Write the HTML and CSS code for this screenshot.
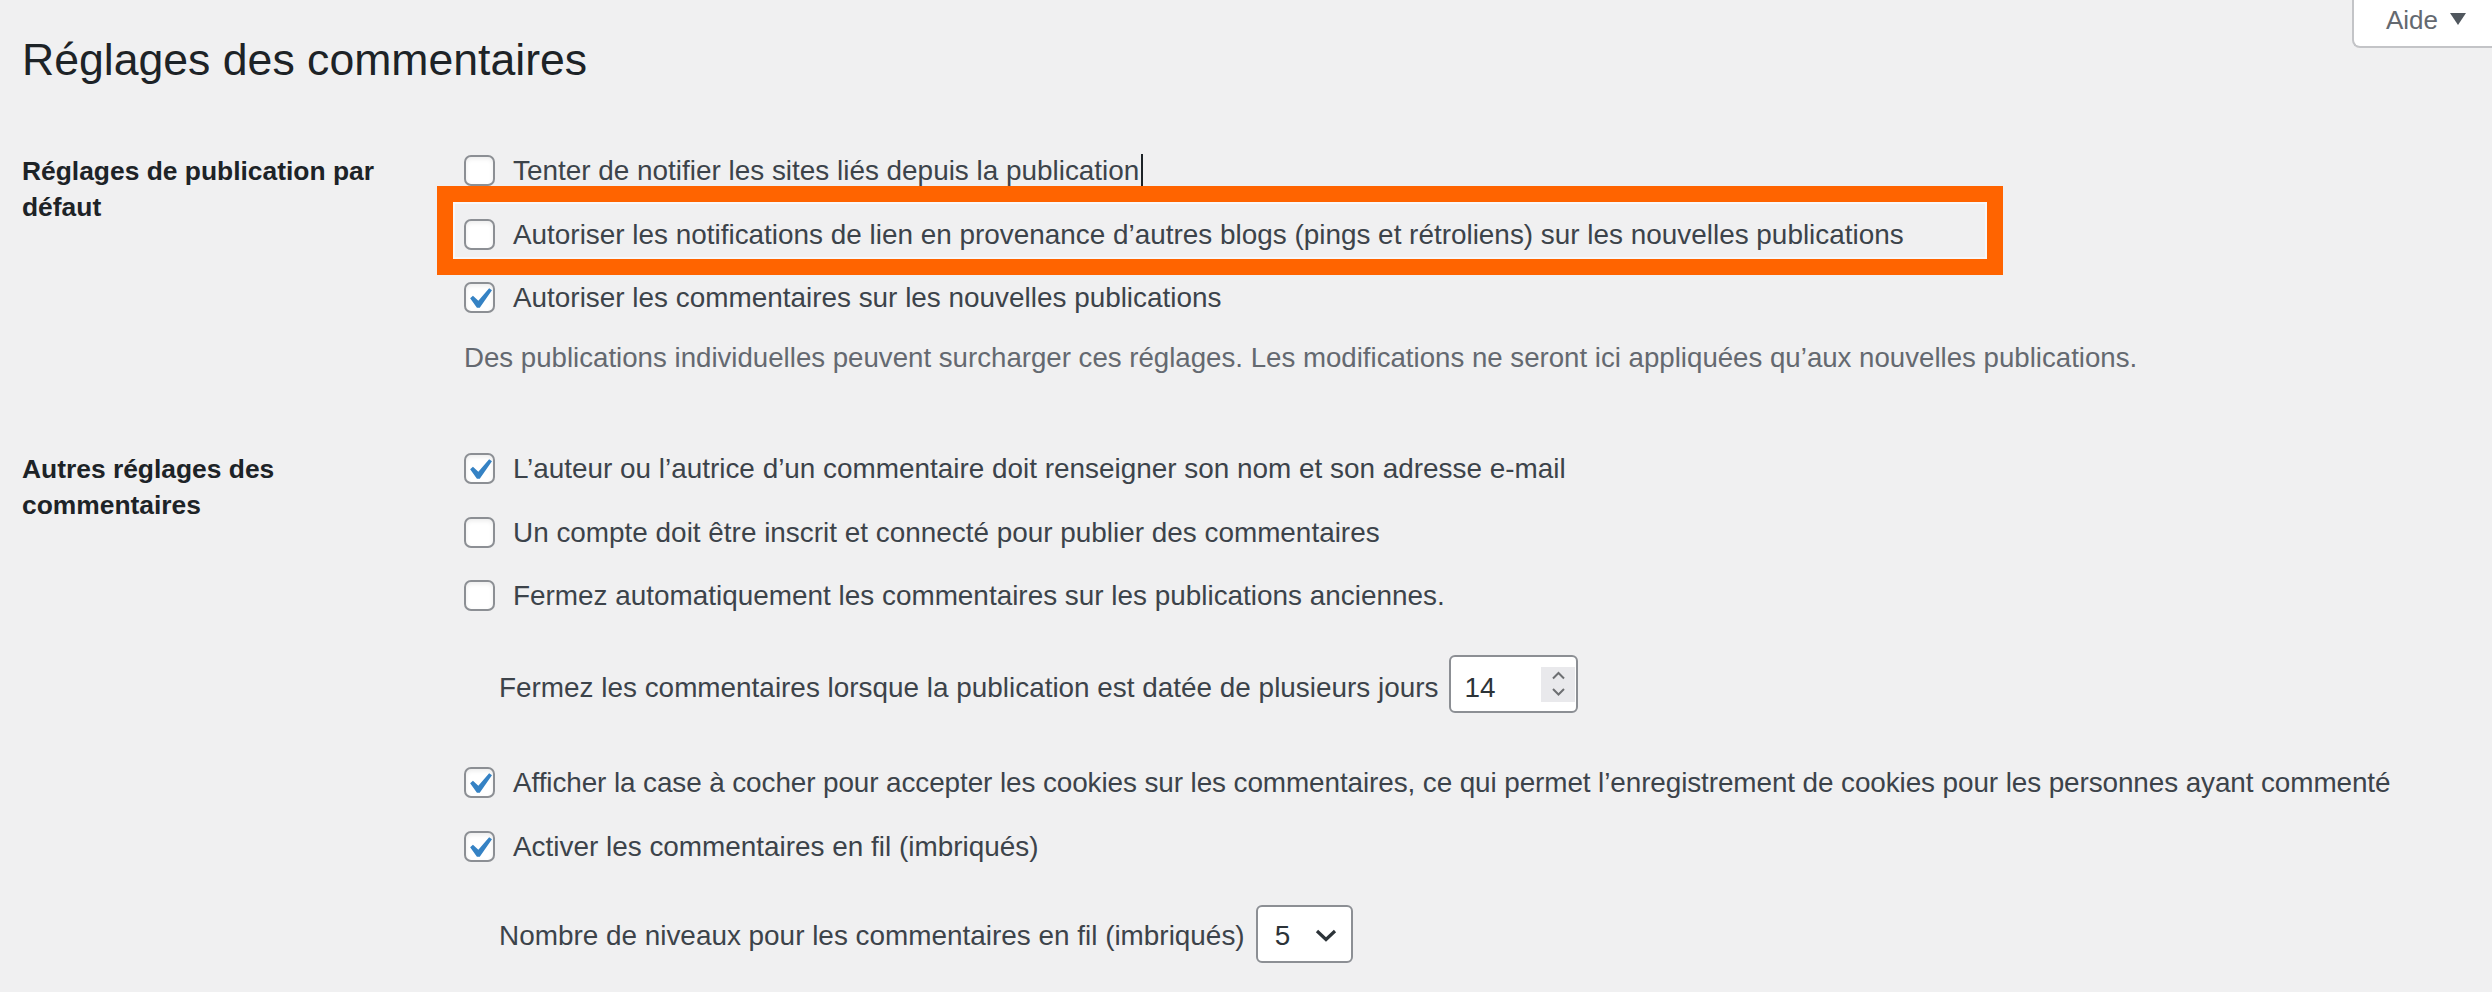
FILE: index.html
```html
<!DOCTYPE html>
<html lang="fr">
<head>
<meta charset="utf-8">
<title>Réglages des commentaires</title>
<link rel="stylesheet" href="styles.css">
</head>
<body>
<div class="screen-meta-links">
  <div class="help-btn"><span class="help-label">Aide</span><span class="tri"></span></div>
</div>
<div class="wrap">
  <h1 class="page-title">Réglages des commentaires</h1>

  <section class="form-row sec-first">
    <div class="th">Réglages de publication par défaut</div>
    <div class="td">
      <div class="opt"><span class="cb"></span><span class="txt">Tenter de notifier les sites liés depuis la publication</span><span class="caret"></span></div>
      <div class="opt"><span class="cb"></span><span class="txt">Autoriser les notifications de lien en provenance d’autres blogs (pings et rétroliens) sur les nouvelles publications</span><span class="highlight"></span></div>
      <div class="opt"><span class="cb on"><svg class="check" viewBox="0 0 20 20"><path d="M14.83 4.89l1.34.94-5.81 8.38H9.02L5.78 9.67l1.34-1.25 2.57 2.4z"/></svg></span><span class="txt">Autoriser les commentaires sur les nouvelles publications</span></div>
      <p class="description">Des publications individuelles peuvent surcharger ces réglages. Les modifications ne seront ici appliquées qu’aux nouvelles publications.</p>
    </div>
  </section>

  <section class="form-row sec-second">
    <div class="th">Autres réglages des commentaires</div>
    <div class="td">
      <div class="opt"><span class="cb on"><svg class="check" viewBox="0 0 20 20"><path d="M14.83 4.89l1.34.94-5.81 8.38H9.02L5.78 9.67l1.34-1.25 2.57 2.4z"/></svg></span><span class="txt">L’auteur ou l’autrice d’un commentaire doit renseigner son nom et son adresse e-mail</span></div>
      <div class="opt"><span class="cb"></span><span class="txt">Un compte doit être inscrit et connecté pour publier des commentaires</span></div>
      <div class="opt"><span class="cb"></span><span class="txt">Fermez automatiquement les commentaires sur les publications anciennes.</span></div>
      <div class="sub sub-days">
        <span class="txt">Fermez les commentaires lorsque la publication est datée de plusieurs jours</span>
        <div class="num-input"><span class="num-val">14</span>
          <span class="spinner"><svg viewBox="0 0 34 35" width="34" height="35"><polyline points="12,11.5 17.5,6 23,11.5"/><polyline points="12,22 17.5,27.5 23,22"/></svg></span>
        </div>
      </div>
      <div class="opt opt-after-sub"><span class="cb on"><svg class="check" viewBox="0 0 20 20"><path d="M14.83 4.89l1.34.94-5.81 8.38H9.02L5.78 9.67l1.34-1.25 2.57 2.4z"/></svg></span><span class="txt txt-tight">Afficher la case à cocher pour accepter les cookies sur les commentaires, ce qui permet l’enregistrement de cookies pour les personnes ayant commenté</span></div>
      <div class="opt"><span class="cb on"><svg class="check" viewBox="0 0 20 20"><path d="M14.83 4.89l1.34.94-5.81 8.38H9.02L5.78 9.67l1.34-1.25 2.57 2.4z"/></svg></span><span class="txt">Activer les commentaires en fil (imbriqués)</span></div>
      <div class="sub sub-levels">
        <span class="txt">Nombre de niveaux pour les commentaires en fil (imbriqués)</span>
        <div class="select"><span class="sel-val">5</span>
          <svg class="sel-arrow" viewBox="0 0 22 13" width="22" height="13"><polyline points="2,2 11,10.5 20,2"/></svg>
        </div>
      </div>
    </div>
  </section>
</div>
</body>
</html>
```
FILE: styles.css
```css
html, body {
  margin: 0;
  padding: 0;
}
body {
  background: #f0f0f1;
  color: #3c434a;
  font-family: "Liberation Sans", Arial, sans-serif;
  font-size: 27.9px;
  overflow: hidden;
}

/* Help tab */
.screen-meta-links {
  float: right;
}
.help-btn {
  box-sizing: border-box;
  width: 140px;
  height: 48px;
  background: #fff;
  border-left: 2px solid #c3c4c7;
  border-bottom: 2px solid #c3c4c7;
  border-bottom-left-radius: 8px;
  padding: 5px 0 0 32px;
  display: flex;
  align-items: flex-start;
  color: #646970;
  font-size: 26px;
  line-height: 30px;
}
.tri {
  width: 0;
  height: 0;
  margin: 8px 0 0 12px;
  border-left: 8.5px solid transparent;
  border-right: 8.5px solid transparent;
  border-top: 12px solid #50575e;
}

/* Page */
.wrap {
  padding: 31px 0 0 22px;
}
.page-title {
  margin: 0;
  font-size: 44.6px;
  font-weight: 400;
  line-height: 58px;
  color: #1d2327;
}

.form-row {
  display: grid;
  grid-template-columns: 442px 1fr;
}
.sec-first {
  margin-top: 63.5px;
}
.sec-second {
  margin-top: 77.5px;
}
.th {
  font-size: 26.4px;
  font-weight: 700;
  line-height: 36.4px;
  color: #1d2327;
  padding-right: 20px;
}
.td {
  padding-top: 2.5px;
}

.opt {
  position: relative;
  display: flex;
  align-items: center;
  height: 31px;
  white-space: nowrap;
  line-height: 31px;
}
.opt + .opt {
  margin-top: 32.5px;
}
.txt {
  line-height: 31px;
  white-space: nowrap;
}
.txt-tight {
  letter-spacing: -0.1px;
}

.cb {
  position: relative;
  box-sizing: border-box;
  flex: none;
  width: 31px;
  height: 31px;
  margin-right: 18px;
  background: #fff;
  border: 2px solid #8c8f94;
  border-radius: 7px;
  box-shadow: inset 0 2px 4px rgba(0, 0, 0, 0.08);
}
.check {
  position: absolute;
  top: -6px;
  left: -8px;
  width: 42px;
  height: 42px;
  fill: #3582c4;
}

.caret {
  flex: none;
  width: 2px;
  height: 34px;
  margin-left: 2px;
  background: #1d2327;
}

.highlight {
  position: absolute;
  top: -32.5px;
  left: -27px;
  box-sizing: border-box;
  width: 1566px;
  height: 89px;
  border: 16px solid #ff6400;
  box-shadow: inset 0 0 0 2px rgba(255, 255, 255, 0.55);
  pointer-events: none;
}

.description {
  margin: 29px 0 0;
  font-size: 27.65px;
  line-height: 31px;
  color: #646970;
  white-space: nowrap;
}

/* Sub rows with inputs */
.sub {
  display: flex;
  align-items: baseline;
  padding-left: 35px;
  white-space: nowrap;
}
.sub-days {
  margin-top: 44px;
}
.opt.opt-after-sub {
  margin-top: 54px;
}
.sub-levels {
  margin-top: 43.5px;
}

.num-input {
  position: relative;
  box-sizing: border-box;
  width: 129px;
  height: 58px;
  margin-left: 11px;
  padding: 7px 0 0 13px;
  line-height: 47px;
  background: #fff;
  border: 2px solid #8c8f94;
  border-radius: 6px;
  color: #2c3338;
}
.spinner {
  position: absolute;
  top: 10px;
  right: 1px;
  width: 34px;
  height: 35px;
  background: #e9e9ec;
}
.spinner svg {
  display: block;
}
.spinner polyline {
  fill: none;
  stroke: #6d6f72;
  stroke-width: 2;
}

.select {
  position: relative;
  box-sizing: border-box;
  width: 97px;
  height: 58px;
  margin-left: 11px;
  padding: 5px 0 0 17px;
  line-height: 47px;
  background: #fff;
  border: 2px solid #8c8f94;
  border-radius: 6px;
  color: #2c3338;
}
.sel-arrow {
  position: absolute;
  top: 22px;
  left: 57px;
}
.sel-arrow polyline {
  fill: none;
  stroke: #2c3338;
  stroke-width: 3.2;
}
```
